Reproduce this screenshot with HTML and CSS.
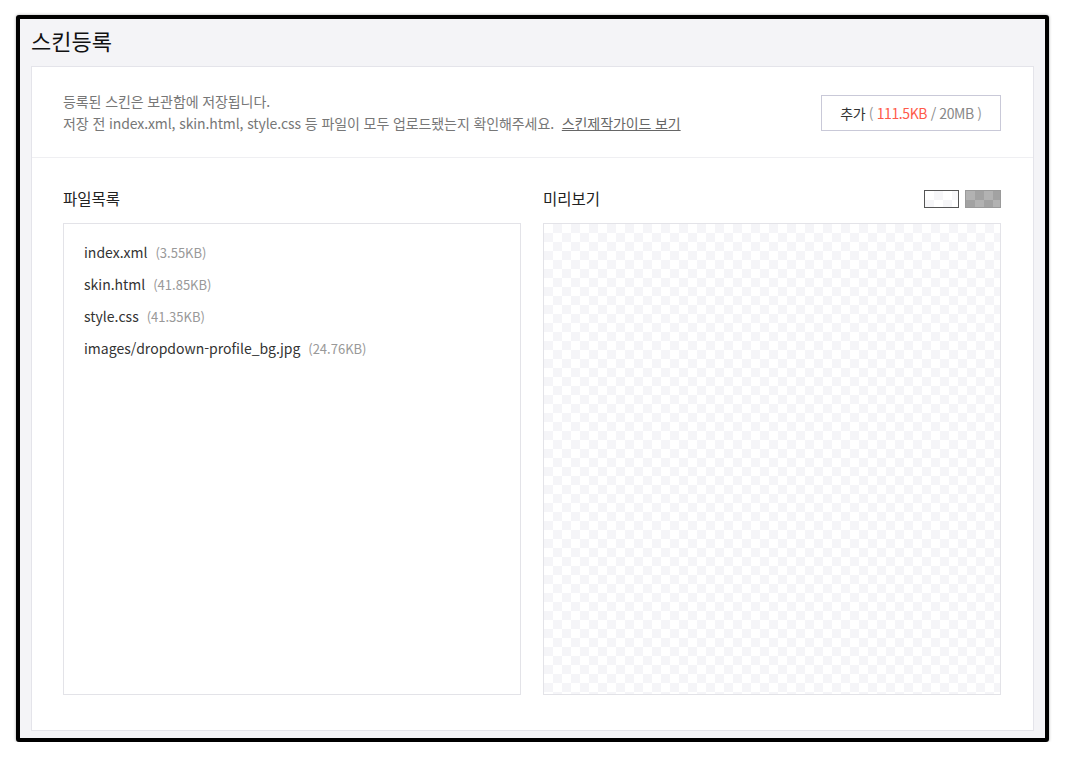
FILE: index.html
```html
<!DOCTYPE html>
<html lang="ko">
<head>
<meta charset="utf-8">
<title>스킨등록</title>
<link rel="stylesheet" href="styles.css">
</head>
<body>
<div class="frame">
  <h1 class="title">스킨등록</h1>
  <div class="card">
    <div class="card-head">
      <div class="desc">
        <p>등록된 스킨은 보관함에 저장됩니다.</p>
        <p>저장 전 index.xml, skin.html, style.css 등 파일이 모두 업로드됐는지 확인해주세요. <a class="guide" href="#">스킨제작가이드 보기</a></p>
      </div>
      <button class="add-btn" type="button">추가 <span class="paren">(</span> <span class="used">111.5KB</span><span class="total"> / 20MB</span> <span class="paren">)</span></button>
    </div>
    <div class="card-body">
      <section class="col">
        <div class="col-head"><h2>파일목록</h2></div>
        <ul class="files">
          <li>index.xml <span class="size">(3.55KB)</span></li>
          <li>skin.html <span class="size">(41.85KB)</span></li>
          <li>style.css <span class="size">(41.35KB)</span></li>
          <li>images/dropdown-profile_bg.jpg <span class="size">(24.76KB)</span></li>
        </ul>
      </section>
      <section class="col">
        <div class="col-head">
          <h2>미리보기</h2>
          <div class="bg-toggle">
            <button class="tg tg-light" type="button" aria-label="밝은 배경"></button>
            <button class="tg tg-dark" type="button" aria-label="어두운 배경"></button>
          </div>
        </div>
        <div class="preview"></div>
      </section>
    </div>
  </div>
</div>
</body>
</html>
```
FILE: styles.css
```css
* { box-sizing: border-box; }
html, body { margin: 0; padding: 0; background: #fff; }
body {
  font-family: "Noto Sans CJK KR", "Noto Sans", sans-serif;
  color: #333;
}
.frame {
  margin: 15px 0 0 16px;
  width: 1033px;
  height: 727px;
  border: 4px solid #000;
  border-radius: 3px;
  background: #f4f4f7;
  padding: 6px 11px 7px 11px;
  display: flex;
  flex-direction: column;
  overflow: hidden;
  box-shadow: 0 0 3px rgba(0,0,0,0.35);
}
.title {
  margin: 0 0 11px 0;
  font-size: 22px;
  line-height: 30px;
  font-weight: 400;
  color: #111;
  letter-spacing: 0;
}
.card {
  flex: 1;
  background: #fff;
  border: 1px solid #e4e4ea;
  display: flex;
  flex-direction: column;
}
.card-head {
  display: flex;
  justify-content: space-between;
  align-items: flex-start;
  padding: 23px 32px 23px 31px;
  border-bottom: 1px solid #efeff2;
}
.desc p {
  margin: 0;
  font-size: 14px;
  line-height: 22px;
  color: #777;
  letter-spacing: -0.1px;
}
.guide {
  color: #666;
  text-decoration: underline;
  margin-left: 4px;
}
.add-btn {
  margin-top: 5px;
  width: 180px;
  height: 36px;
  background: #fff;
  border: 1px solid #c9c9d8;
  font-family: inherit;
  font-size: 14px;
  color: #333;
  cursor: pointer;
  letter-spacing: -0.4px;
  padding: 0;
}
.add-btn .paren { color: #999; }
.add-btn .used { color: #ff5a4a; }
.add-btn .total { color: #888; }
.card-body {
  display: flex;
  gap: 22px;
  padding: 29px 32px 0 31px;
}
.col { flex: 1; display: flex; flex-direction: column; }
.col-head {
  height: 22px;
  display: flex;
  align-items: center;
  justify-content: space-between;
  margin-bottom: 14px;
}
.col-head h2 {
  margin: 0;
  font-size: 15.5px;
  font-weight: 400;
  color: #222;
  line-height: 22px;
  letter-spacing: 0;
}
.bg-toggle { display: flex; gap: 6px; margin-top: 2px; }
.tg {
  width: 35px;
  height: 18px;
  padding: 0;
  cursor: pointer;
}
.tg-light {
  border: 1px solid #555;
  background: repeating-conic-gradient(#f6f6f8 0 25%, #fff 0 50%) 0 0 / 18px 18px;
}
.tg-dark {
  width: 36px;
  border: 1px solid #9a9a9a;
  background: repeating-conic-gradient(#a2a2a2 0 25%, #b2b2b2 0 50%) 0 0 / 18px 18px;
}
.files {
  list-style: none;
  margin: 0;
  height: 472px;
  border: 1px solid #e3e3e8;
  padding: 12px 20px;
}
.files li {
  height: 32px;
  display: flex;
  align-items: center;
  font-size: 14px;
  color: #333;
  letter-spacing: 0;
  white-space: pre;
}
.files .size {
  font-size: 13px;
  color: #999;
  margin-left: 4px;
}
.preview {
  height: 472px;
  border: 1px solid #e3e3e8;
  background: repeating-conic-gradient(#f5f5f8 0 25%, #fff 0 50%) 0 0 / 18px 18px;
}
```
